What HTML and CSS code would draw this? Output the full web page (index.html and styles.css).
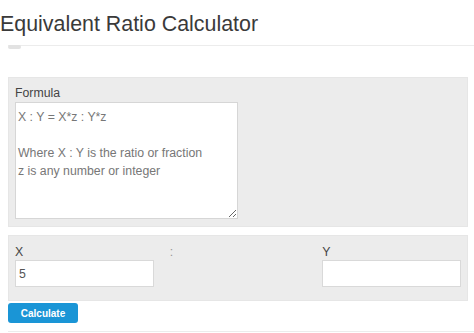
FILE: index.html
```html
<!doctype html>
<html>
<head>
 <meta charset="utf-8">
 <title>Equivalent Ratio Calculator</title>
 <link rel="stylesheet" href="styles.css">
</head>
<body>
  <div id="page">
    <h1 class="title">Equivalent Ratio Calculator</h1>
    <div class="rule"><span class="pill"></span></div>

    <div class="panel formula">
      <label class="lbl" for="formula">Formula</label>
      <textarea id="formula" class="formula-box">X : Y = X*z : Y*z

Where X : Y is the ratio or fraction
z is any number or integer</textarea>
    </div>

    <div class="panel ratio">
      <div class="col">
        <label class="lbl" for="x">X</label>
        <input id="x" class="field" type="text" value="5">
      </div>
      <div class="col">
        <span class="lbl sep">:</span>
      </div>
      <div class="col">
        <label class="lbl" for="y">Y</label>
        <input id="y" class="field" type="text" value="">
      </div>
    </div>

    <button class="calc">Calculate</button>
    <div class="foot"></div>
  </div>
</body>
</html>
```

FILE: styles.css
```css
html,body{margin:0;padding:0;background:#fff;}
body{font-family:"Liberation Sans",Arial,sans-serif;color:#444;}
#page{width:474px;height:333px;overflow:hidden;}
.title{margin:0;padding-top:11px;font-size:21.4px;line-height:26px;font-weight:normal;color:#3a3a3a;}
.rule{margin:10px 0 0 8px;height:1px;background:#ececec;}
.rule .pill{display:block;width:13px;height:4px;margin-top:-2px;border-radius:2px;background:#e2e2e2;}
.panel{margin-left:8px;width:446px;background:#ececec;box-shadow:inset 0 0 0 1px #e6e6e6;}
.formula{margin-top:31px;padding:9px 7px 8px;}
.lbl{display:block;font-size:12.3px;line-height:14px;color:#444;}
.formula-box{display:block;margin-top:2px;width:223px;height:117px;box-sizing:border-box;padding:5px 2px;border:1px solid #d6d6d6;background:#fff;font-family:"Liberation Sans",Arial,sans-serif;font-size:12.3px;line-height:18px;color:#777;outline:none;}
.ratio{margin-top:8px;padding:10px 7px 14px;display:grid;grid-template-columns:1fr 1fr 1fr;column-gap:15px;}
.sep{padding-left:1px;color:#999;}
.field{display:block;margin-top:1px;width:100%;height:27px;box-sizing:border-box;padding:0 3px;border:1px solid #d9d9d9;background:#fff;font-family:"Liberation Sans",Arial,sans-serif;font-size:12.3px;color:#555;outline:none;}
.calc{display:block;margin:2px 0 0 8px;width:70px;height:20px;padding:0;border:0;border-radius:3px;background:#1a95d6;color:#fff;font-family:"Liberation Sans",Arial,sans-serif;font-size:10px;font-weight:bold;cursor:pointer;}
.foot{margin:8px 0 0 8px;height:1px;background:#ececec;}
```
